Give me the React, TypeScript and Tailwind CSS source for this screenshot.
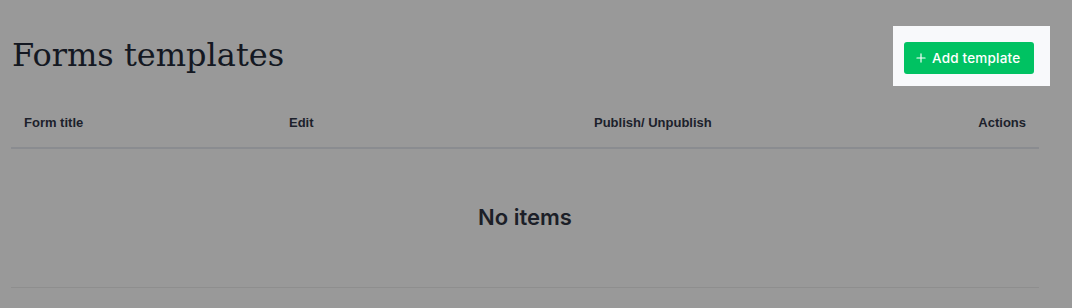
import { Plus } from "lucide-react";

const columns = [
  { label: "Form title", className: "w-[265px]" },
  { label: "Edit", className: "w-[305px]" },
  { label: "Publish/ Unpublish", className: "flex-1" },
  { label: "Actions", className: "text-right" },
];

export default function App() {
  return (
    <div className="w-[1072px] h-[308px] bg-[#999999] overflow-hidden">
      <div className="w-[1050px] pl-[11px]">
        {/* Header */}
        <div className="flex items-start justify-between pt-[26px]">
          <h1
            className="text-[32px] leading-none text-[#141822] mt-[13px] pl-px"
            style={{ fontFamily: '"DejaVu Serif", "Liberation Serif", serif' }}
          >
            Forms templates
          </h1>
          <div className="bg-[#f8f9fb] pl-[11px] pr-[16px] pt-[16px] pb-[12px]">
            <button
              className="flex items-center gap-[4px] h-[32px] w-[130px] pl-[10px] bg-[#00c262] rounded-[3px] text-white text-[13.5px] font-medium tracking-[0.2px]"
              style={{ fontFamily: 'Inter, "Noto Sans", sans-serif' }}
            >
              <Plus className="w-[14px] h-[14px]" strokeWidth={2} />
              Add template
            </button>
          </div>
        </div>

        {/* Table */}
        <div className="w-[1028px] mt-[24px]">
          <div
            className="flex items-start h-[39px] pt-[3px] border-b-2 border-[#8a8c90] text-[13px] font-bold text-[#1c212b]"
            style={{ fontFamily: '"Liberation Sans", Arial, sans-serif' }}
          >
            {columns.map((col) => (
              <div key={col.label} className={`px-[13px] ${col.className}`}>
                {col.label}
              </div>
            ))}
          </div>
          <div className="flex items-center justify-center h-[139px] border-b border-[#8e8e8e]">
            <p
              className="text-[22px] font-semibold text-[#1c1f28] -mt-[2px]"
              style={{ fontFamily: 'Inter, "Noto Sans", sans-serif' }}
            >
              No items
            </p>
          </div>
        </div>
      </div>
    </div>
  );
}
